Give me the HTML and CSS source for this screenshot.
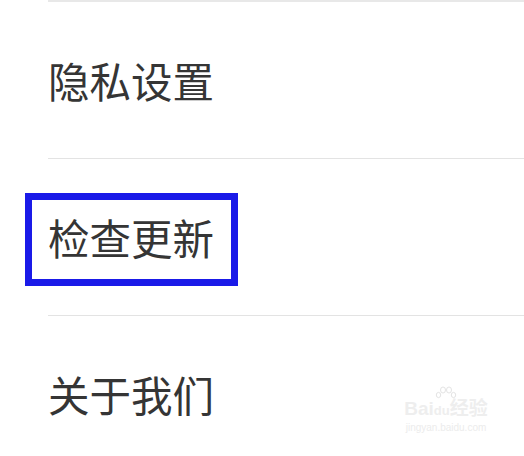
FILE: index.html
```html
<!DOCTYPE html>
<html lang="zh">
<head>
<meta charset="utf-8">
<link rel="stylesheet" href="styles.css">
</head>
<body>
<ul class="menu">
  <li class="item"><span class="label">隐私设置</span></li>
  <li class="item"><span class="label highlight">检查更新</span></li>
  <li class="item"><span class="label">关于我们</span></li>
</ul>
<div class="watermark">
  <svg class="wm-paw" width="22" height="16" viewBox="0 0 22 16">
    <g fill="none" stroke="#e4e4e4" stroke-width="1">
      <ellipse cx="8" cy="4" rx="2.5" ry="3"/>
      <ellipse cx="14" cy="4" rx="2.5" ry="3"/>
      <ellipse cx="3.5" cy="9" rx="2.2" ry="2.6"/>
      <ellipse cx="18.5" cy="9" rx="2.2" ry="2.6"/>
    </g>
  </svg>
  <div class="wm-top">Bai<span class="wm-du">du</span>经验</div>
  <div class="wm-url">jingyan.baidu.com</div>
</div>
</body>
</html>
```
FILE: styles.css
```css
html, body {
  margin: 0;
  padding: 0;
  background: #ffffff;
  width: 524px;
  height: 456px;
  overflow: hidden;
  position: relative;
}
.menu {
  list-style: none;
  margin: 0;
  padding: 0 0 0 48px;
}
.menu::before {
  content: "";
  display: block;
  height: 2px;
  background: #e8e8e8;
}
.item {
  height: 156px;
  display: flex;
  align-items: center;
  border-bottom: 1px solid #e3e3e3;
}
.label {
  font-family: "Noto Sans CJK SC", "Noto Sans", sans-serif;
  font-size: 41.5px;
  line-height: 1;
  color: #353535;
  position: relative;
  top: 1px;
}
.highlight::after {
  content: "";
  position: absolute;
  left: -23px;
  right: -24px;
  top: -24px;
  bottom: -27px;
  border: 7px solid #1a1ae8;
}
.watermark {
  position: absolute;
  left: 400px;
  top: 386px;
  font-family: "Liberation Sans", "Noto Sans CJK SC", sans-serif;
  text-align: center;
  width: 92px;
}
.wm-paw {
  display: block;
  margin: 0 auto -4px;
}
.wm-top {
  font-size: 19px;
  line-height: 22px;
  color: #eeeeee;
  font-weight: bold;
}
.wm-du {
  font-size: 13px;
}
.wm-url {
  font-size: 10px;
  line-height: 12px;
  color: #ececec;
}
```
